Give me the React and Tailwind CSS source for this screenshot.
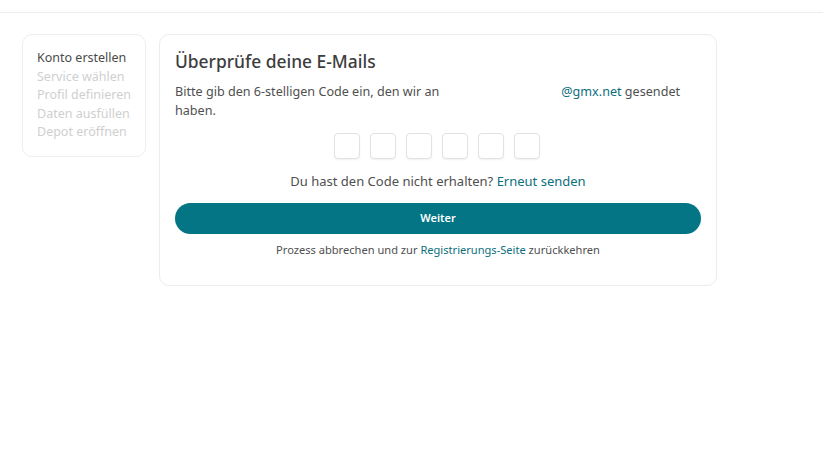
import { useState } from 'react';

const steps = [
    { label: 'Konto erstellen', active: true },
    { label: 'Service wählen', active: false },
    { label: 'Profil definieren', active: false },
    { label: 'Daten ausfüllen', active: false },
    { label: 'Depot eröffnen', active: false },
];

const App = () => {
    const [code, setCode] = useState(['', '', '', '', '', '']);

    // Update a single digit field
    const handleChange = (index, value) => {
        setCode(prev => prev.map((c, i) => (i === index ? value.slice(-1) : c)));
    };

    return (
        <div className="min-h-screen bg-white" style={{ fontFamily: '"Noto Sans", "Open Sans", sans-serif' }}>
            {/* Header */}
            <div className="h-[13px] border-b border-[#ececec] bg-white"></div>

            <div className="flex items-start gap-[13px] pl-[22px] pt-[21px]">
                {/* Steps */}
                <div className="w-[124px] h-[123px] rounded-[10px] border border-[#eeeeee] px-[14px] pt-[14px]">
                    <ul className="text-[12.5px] leading-[18.6px] whitespace-nowrap">
                        {steps.map(step => (
                            <li
                                key={step.label}
                                className={step.active ? 'text-[#4a4a4a]' : 'text-[#cfcfcf]'}
                            >
                                {step.label}
                            </li>
                        ))}
                    </ul>
                </div>

                {/* Verification card */}
                <div className="w-[558px] rounded-[10px] border border-[#ececec] px-[15px] pt-[14px] pb-[27px]">
                    <h1 className="text-[17.4px] font-medium text-[#3d3d3d] leading-[24px]">
                        Überprüfe deine E-Mails
                    </h1>
                    <p className="mt-[10px] text-[12.6px] leading-[18.5px] text-[#4f4f4f] pr-[6px]">
                        Bitte gib den 6-stelligen Code ein, den wir an
                        <span className="inline-block w-[122px]"></span>
                        <span className="text-[#0b6f7d]">@gmx.net</span> gesendet haben.
                    </p>

                    <div className="mt-[13px] flex justify-center gap-[10px] pr-[3px]">
                        {code.map((c, i) => (
                            <input
                                key={i}
                                value={c}
                                onChange={e => handleChange(i, e.target.value)}
                                className="w-[26px] h-[26px] rounded-[4px] border border-[#e2e2e2] bg-white text-center text-sm shadow-[0_1px_2px_rgba(0,0,0,0.06)] focus:outline-none"
                            />
                        ))}
                    </div>

                    <p className="mt-[13px] text-center text-[13px] leading-[18px] text-[#4f4f4f]">
                        Du hast den Code nicht erhalten?{' '}
                        <a className="text-[#0b6f7d] cursor-pointer">Erneut senden</a>
                    </p>

                    <button
                        type="button"
                        className="mt-[13px] w-full h-[31px] rounded-full bg-[#037585] text-white text-[11px] font-semibold"
                    >
                        Weiter
                    </button>

                    <p className="mt-[8px] text-center text-[11.1px] leading-[16px] text-[#4f4f4f]">
                        Prozess abbrechen und zur{' '}
                        <a className="text-[#0b6f7d] cursor-pointer">Registrierungs-Seite</a> zurückkehren
                    </p>
                </div>
            </div>
        </div>
    );
};

export default App;
